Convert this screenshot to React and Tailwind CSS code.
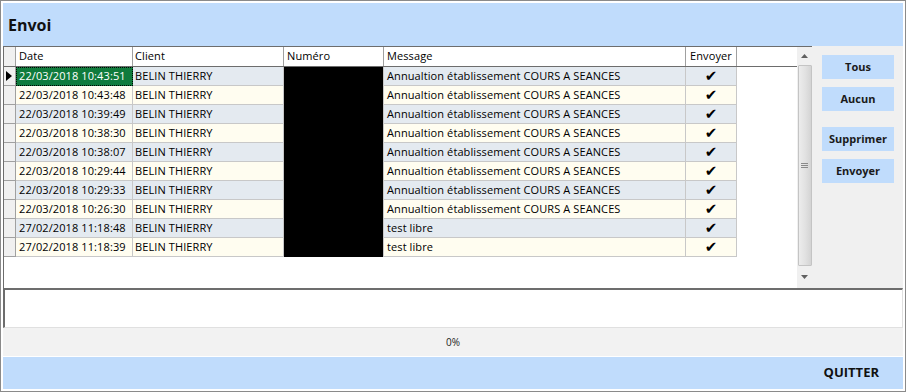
import React from 'react';

const rows = [
  ['22/03/2018 10:43:51', 'Annualtion établissement COURS A SEANCES'],
  ['22/03/2018 10:43:48', 'Annualtion établissement COURS A SEANCES'],
  ['22/03/2018 10:39:49', 'Annualtion établissement COURS A SEANCES'],
  ['22/03/2018 10:38:30', 'Annualtion établissement COURS A SEANCES'],
  ['22/03/2018 10:38:07', 'Annualtion établissement COURS A SEANCES'],
  ['22/03/2018 10:29:44', 'Annualtion établissement COURS A SEANCES'],
  ['22/03/2018 10:29:33', 'Annualtion établissement COURS A SEANCES'],
  ['22/03/2018 10:26:30', 'Annualtion établissement COURS A SEANCES'],
  ['27/02/2018 11:18:48', 'test libre'],
  ['27/02/2018 11:18:39', 'test libre'],
];

const SideButton = ({ label, className = '' }) => (
  <button className={`w-[72px] h-[24px] bg-[#c0dcfc] text-[11px] font-bold text-[#1a1a1a] ${className}`}>
    {label}
  </button>
);

export default function App() {
  return (
    <div className="w-[906px] h-[392px] bg-white border border-[#8a8a8a] p-[2px] flex flex-col font-['Open_Sans',sans-serif] text-black">
      {/* Title */}
      <div className="h-[43px] bg-[#c0dcfc] flex items-center pl-[5px]">
        <span className="text-[16px] font-bold text-[#111]">Envoi</span>
      </div>

      {/* Grid + side panel */}
      <div className="h-[242px] flex">
        <div className="w-[809px] border-t border-l border-[#6d6d6d] bg-white flex">
          <div className="flex-1 text-[11px] tracking-[0.1px]">
            {/* header */}
            <div className="flex h-[20px] border-b border-[#6d6d6d]">
              <div className="w-[12px] bg-[#f0f0f0] border-r border-[#a0a0a0]"></div>
              <div className="w-[117px] border-r border-[#a0a0a0] pl-[3px] flex items-center">Date</div>
              <div className="w-[151px] border-r border-[#a0a0a0] pl-[2px] flex items-center">Client</div>
              <div className="w-[100px] border-r border-[#a0a0a0] pl-[3px] flex items-center">Numéro</div>
              <div className="w-[302px] border-r border-[#a0a0a0] pl-[3px] flex items-center">Message</div>
              <div className="w-[51px] border-r border-[#a0a0a0] flex items-center justify-center">Envoyer</div>
            </div>
            {rows.map(([date, msg], i) => {
              const bg = i % 2 === 0 ? 'bg-[#e4eaf0]' : 'bg-[#fffdf0]';
              return (
                <div key={i} className="flex h-[19px]">
                  <div className="w-[12px] bg-[#f0f0f0] border-r border-b border-[#a0a0a0] flex items-center pl-[2px]">
                    {i === 0 && (
                      <svg width="6" height="10" viewBox="0 0 6 10">
                        <path d="M0 0 L6 5 L0 10 Z" fill="#000" />
                      </svg>
                    )}
                  </div>
                  {i === 0 ? (
                    <div className="w-[117px] bg-[#0f7b3c] text-white border border-dotted border-black pl-[2px] flex items-center">
                      {date}
                    </div>
                  ) : (
                    <div className={`w-[117px] ${bg} border-r border-b border-[#c8c8c8] pl-[3px] flex items-center`}>{date}</div>
                  )}
                  <div className={`w-[151px] ${bg} border-r border-b border-[#c8c8c8] pl-[2px] flex items-center`}>BELIN THIERRY</div>
                  <div className="w-[100px] bg-black border-r border-[#c8c8c8]"></div>
                  <div className={`w-[302px] ${bg} border-r border-b border-[#c8c8c8] pl-[3px] flex items-center`}>{msg}</div>
                  <div className={`w-[51px] ${bg} border-r border-b border-[#c8c8c8] flex items-center justify-center font-['DejaVu_Sans',sans-serif] text-[15px] leading-none`}>
                    ✔
                  </div>
                </div>
              );
            })}
          </div>
          {/* scrollbar */}
          <div className="w-[15px] bg-[#f0f0f0] flex flex-col items-center">
            <div className="h-[18px] flex items-center justify-center">
              <svg width="7" height="4" viewBox="0 0 7 4"><path d="M0 4 L3.5 0 L7 4 Z" fill="#606060" /></svg>
            </div>
            <div className="w-[14px] flex-1 border border-[#c4c4c4] rounded-[1px] bg-gradient-to-r from-[#ececec] via-[#e2e2e2] to-[#d4d4d4] flex items-center justify-center">
              <svg width="7" height="7" viewBox="0 0 7 7">
                <path d="M0 1.5 H7 M0 3.5 H7 M0 5.5 H7" stroke="#8a8a8a" strokeWidth="1" />
              </svg>
            </div>
            <div className="h-[22px] flex items-center justify-center">
              <svg width="7" height="4" viewBox="0 0 7 4"><path d="M0 0 L3.5 4 L7 0 Z" fill="#606060" /></svg>
            </div>
          </div>
        </div>
        <div className="flex-1 bg-[#f0f0f0] flex flex-col items-center pt-[9px] pl-[1px]">
          <SideButton label="Tous" />
          <SideButton label="Aucun" className="mt-[8px]" />
          <SideButton label="Supprimer" className="mt-[16px]" />
          <SideButton label="Envoyer" className="mt-[8px]" />
        </div>
      </div>

      {/* Text box */}
      <div className="h-[40px] bg-white border-t-2 border-l-2 border-[#6d6d6d] border-b border-b-[#e0e0e0] border-r border-r-[#e0e0e0]"></div>

      {/* Progress */}
      <div className="h-[28px] bg-[#f2f2f2] flex items-center justify-center text-[10px] text-[#222]">0%</div>

      {/* Bottom bar */}
      <div className="flex-1 mt-[1px] bg-[#c0dcfc] flex items-center justify-end pr-[24px]">
        <span className="text-[13px] font-bold text-[#111]">QUITTER</span>
      </div>
    </div>
  );
}
